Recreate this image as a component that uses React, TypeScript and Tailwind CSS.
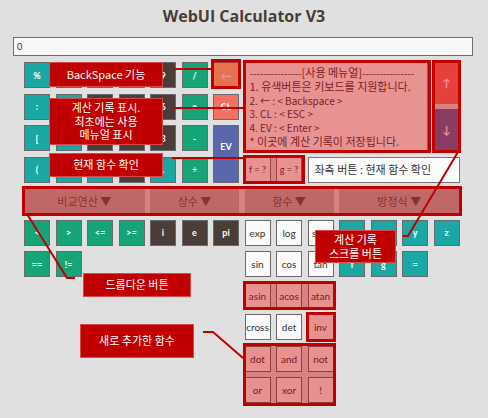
import type { ReactNode } from 'react'

type Tone = 'teal' | 'green' | 'dark' | 'white' | 'cl' | 'ev' | 'back'

const toneClass: Record<Tone, string> = {
  teal: 'bg-[#1ba8a5] text-white font-bold text-[9px]',
  green: 'bg-[#17a479] text-white font-bold text-[9px]',
  dark: 'bg-[#4a3c36] text-white font-bold text-[9px]',
  white: 'bg-[#fafafa] text-[#333] text-[10px]',
  cl: 'bg-[#f47062] text-white font-bold text-[9px]',
  ev: 'bg-[#5868aa] text-white font-bold text-[9px]',
  back: 'bg-[#f5c48a] text-white font-bold text-[11px]',
}

// label is left empty for keys that sit fully under a callout in the screenshot
function Key({ label = '', tone, className = '' }: { label?: string; tone: Tone; className?: string }) {
  return (
    <div className={`flex items-center justify-center border border-[#6a6a6a] leading-none ${toneClass[tone]} ${className}`}>
      {label}
    </div>
  )
}

function Dropdown({ label, className }: { label: string; className: string }) {
  return (
    <div className={`flex items-center justify-center bg-[#b4b4b4] text-[11px] text-[#555] font-['Noto_Sans_CJK_KR',sans-serif] ${className}`}>
      {label} ▼
    </div>
  )
}

// translucent red marker the screenshot author drew over parts of the UI
function Mark({ className }: { className: string }) {
  return <div className={`absolute border-[3px] border-[#c00000] bg-[rgba(207,0,0,0.42)] ${className}`} />
}

function Callout({ className, children }: { className: string; children: ReactNode }) {
  return (
    <div className={`absolute flex flex-col items-center justify-center bg-[#c00000] border border-[#d84a4a] text-white text-[11px] leading-[13.5px] font-['Noto_Sans_CJK_KR',sans-serif] ${className}`}>
      {children}
    </div>
  )
}

export default function App() {
  return (
    <div className="relative w-[488px] h-[418px] overflow-hidden bg-[#e0e0e0] font-['Lato','Noto_Sans_CJK_KR',sans-serif]">
      <div className="h-[31px] flex items-center justify-center text-[16px] font-bold text-[#4a3c36] font-['Open_Sans',sans-serif]">
        WebUI Calculator V3
      </div>
      <div className="ml-[13px] mt-[6px] w-[460px] h-[19px] flex items-center pl-[3px] bg-[#f8f8f8] border border-[#6f6f6f] text-[9px] text-[#333]">
        0
      </div>

      <div className="ml-[24px] mt-[6px] grid grid-cols-[repeat(14,26px)] auto-rows-[26px] gap-[5.5px]">
        <Key label="%" tone="teal" />
        <Key tone="teal" />
        <Key tone="dark" />
        <Key tone="dark" />
        <Key label="9" tone="dark" />
        <Key label="/" tone="green" />
        <Key label="←" tone="back" />
        <div className="col-span-6 row-span-3 bg-[#fcfcfc] border border-[#8a8a8a] px-[4px] pt-[3px] text-[10px] leading-[13.8px] text-[#3a3a3a] font-['Noto_Sans_CJK_KR',sans-serif] whitespace-nowrap overflow-hidden">
          <div>
            ---------------<span className="text-[11px]">[사용 메뉴얼]</span>---------------
          </div>
          <div className="text-[11px]">1. 유색버튼은 키보드를 지원합니다.</div>
          <div>2. ← : &lt; Backspace &gt;</div>
          <div>3. CL : &lt; ESC &gt;</div>
          <div>4. EV : &lt; Enter &gt;</div>
          <div className="text-[11px]">* 이곳에 계산 기록이 저장됩니다.</div>
        </div>
        <div className="row-span-3 flex flex-col gap-[5px]">
          <div className="flex-1 flex items-center justify-center bg-[#f47062] text-white text-[11px] font-bold">↑</div>
          <div className="flex-1 flex items-center justify-center bg-[#5868aa] text-white text-[11px] font-bold">↓</div>
        </div>

        <Key label=":" tone="teal" />
        <Key tone="teal" />
        <Key tone="dark" />
        <Key tone="dark" />
        <Key label="6" tone="dark" />
        <Key label="•" tone="green" />
        <Key label="CL" tone="cl" />

        <Key label="[" tone="teal" />
        <Key tone="teal" />
        <Key tone="dark" />
        <Key tone="dark" />
        <Key label="3" tone="dark" />
        <Key label="-" tone="green" />
        <Key label="EV" tone="ev" className="row-span-2 pb-[14px]" />

        <Key label="(" tone="teal" />
        <Key tone="teal" />
        <Key tone="teal" />
        <Key tone="dark" />
        <Key label="." tone="teal" />
        <Key label="+" tone="green" />
        <div className="flex items-center justify-center bg-[#fcfcfc] border border-[#777] text-[9px] text-[#444]">f = ?</div>
        <div className="flex items-center justify-center bg-[#fcfcfc] border border-[#777] text-[9px] text-[#444]">g = ?</div>
        <div className="col-span-5 flex items-center pl-[6px] bg-[#fcfcfc] border border-[#777] text-[11px] text-[#333] font-['Noto_Sans_CJK_KR',sans-serif]">
          좌측 버튼 : 현재 함수 확인
        </div>

        <Dropdown label="비교연산" className="col-span-4" />
        <Dropdown label="상수" className="col-span-3" />
        <Dropdown label="함수" className="col-span-3" />
        <Dropdown label="방정식" className="col-span-4" />

        <Key label="<" tone="green" />
        <Key label=">" tone="green" />
        <Key label="<=" tone="green" />
        <Key label=">=" tone="green" />
        <Key label="i" tone="dark" />
        <Key label="e" tone="dark" />
        <Key label="pi" tone="dark" />
        <Key label="exp" tone="white" />
        <Key label="log" tone="white" />
        <Key label="sqrt" tone="white" />
        <Key tone="teal" />
        <Key tone="teal" />
        <Key label="y" tone="teal" />
        <Key label="z" tone="teal" />

        <Key label="==" tone="green" />
        <Key label="!=" tone="green" />
        <Key label="sin" tone="white" className="col-start-8" />
        <Key label="cos" tone="white" />
        <Key label="tan" tone="white" />
        <Key label="f" tone="teal" />
        <Key label="g" tone="teal" />
        <Key label="=" tone="teal" />

        <Key label="asin" tone="white" className="col-start-8" />
        <Key label="acos" tone="white" />
        <Key label="atan" tone="white" />

        <Key label="cross" tone="white" className="col-start-8" />
        <Key label="det" tone="white" />
        <Key label="inv" tone="white" />

        <Key label="dot" tone="white" className="col-start-8" />
        <Key label="and" tone="white" />
        <Key label="not" tone="white" />

        <Key label="or" tone="white" className="col-start-8" />
        <Key label="xor" tone="white" />
        <Key label="!" tone="white" />
      </div>

      <Mark className="left-[211px] top-[59px] w-[30px] h-[30px]" />
      <Mark className="left-[243px] top-[60px] w-[188px] h-[93px]" />
      <Mark className="left-[432px] top-[60px] w-[29px] h-[93px]" />
      <Mark className="left-[243px] top-[155px] w-[62px] h-[29px]" />
      <Mark className="left-[22px] top-[186px] w-[440px] h-[30px]" />
      <Mark className="left-[243px] top-[281px] w-[93px] h-[29px]" />
      <Mark className="left-[306px] top-[312px] w-[30px] h-[30px]" />
      <Mark className="left-[243px] top-[343px] w-[93px] h-[63px]" />

      <svg className="absolute inset-0 pointer-events-none" width="488" height="418" fill="none" stroke="#c00000" strokeWidth="2">
        <polyline points="173,69 212,69" />
        <polyline points="173,108 244,108" />
        <polyline points="172,158 245,158" />
        <polyline points="27,214 67,278 75,278" />
        <polyline points="458,152 408,236 403,236" />
        <polyline points="203,332 213,332 243,358" />
      </svg>

      <Callout className="left-[49px] top-[62px] w-[114px] h-[25px]">BackSpace 기능</Callout>
      <Callout className="left-[49px] top-[98px] w-[114px] h-[47px]">
        <span>계산 기록 표시.</span>
        <span>최초에는 사용</span>
        <span>메뉴얼 표시</span>
      </Callout>
      <Callout className="left-[49px] top-[153px] w-[114px] h-[24px]">현재 함수 확인</Callout>
      <Callout className="left-[83px] top-[273px] w-[108px] h-[24px]">드롭다운 버튼</Callout>
      <Callout className="left-[315px] top-[230px] w-[81px] h-[33px]">
        <span>계산 기록</span>
        <span>스크롤 버튼</span>
      </Callout>
      <Callout className="left-[80px] top-[324px] w-[114px] h-[34px]">새로 추가한 함수</Callout>
    </div>
  )
}
